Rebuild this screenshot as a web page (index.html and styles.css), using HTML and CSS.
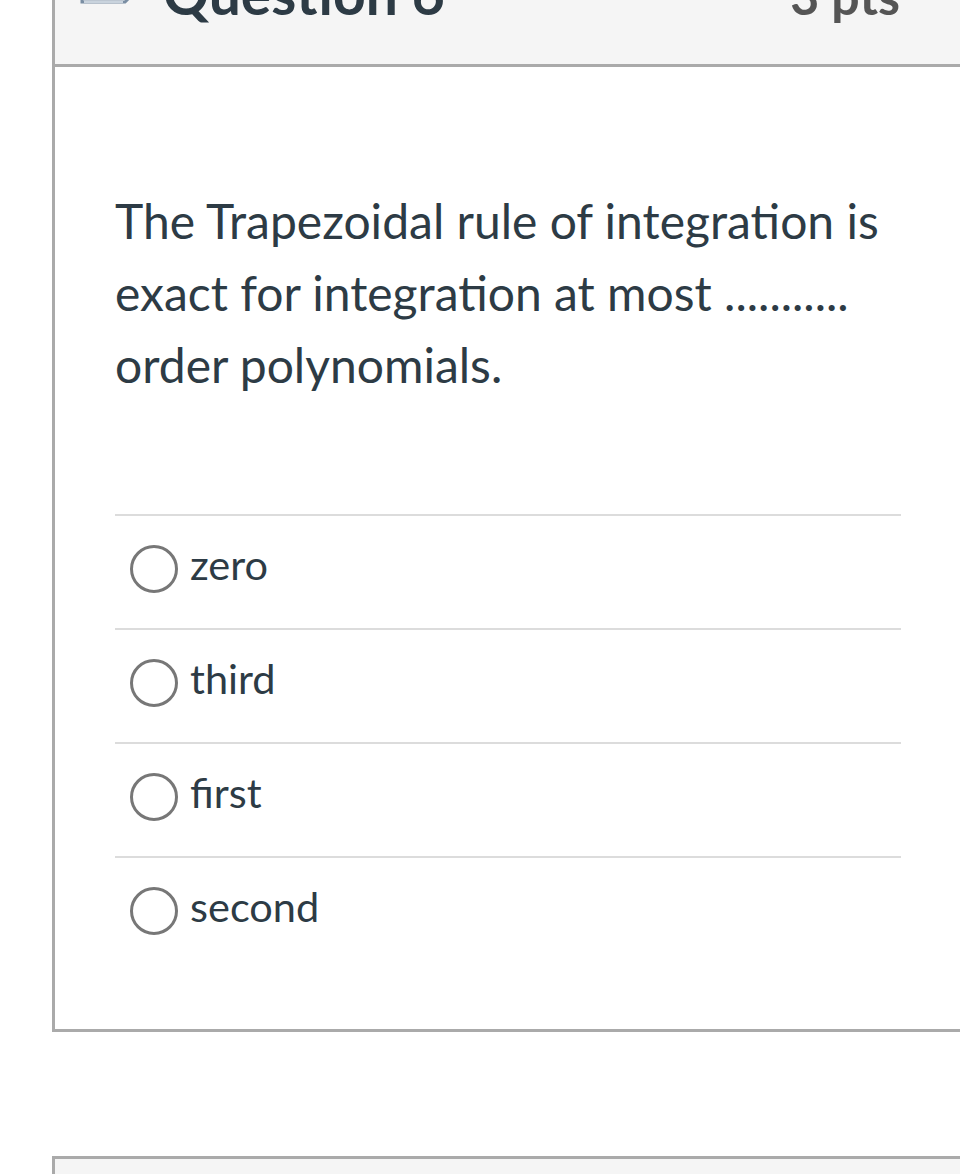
FILE: index.html
```html
<!DOCTYPE html>
<html>
<head>
<meta charset="utf-8">
<link rel="stylesheet" href="styles.css">
</head>
<body>
<div class="card">
  <div class="card-header">
    <div class="title">
      <svg class="q-icon" width="56" height="50" viewBox="0 0 56 50">
        <path d="M3 2 V42 H46 L52 36 V2" fill="#fff" stroke="#7a8ea3" stroke-width="3"/>
        <path d="M5 42 H44" stroke="#c9d3dd" stroke-width="2"/>
      </svg>
      <span class="q-name">Question 6</span>
    </div>
    <span class="q-pts">3 pts</span>
  </div>
  <div class="card-body">
    <p class="q-text">The Trapezoidal rule of integration is exact for integration at most ........... order polynomials.</p>
    <div class="answers">
      <label class="answer"><span class="radio"></span><span class="a-text">zero</span></label>
      <label class="answer"><span class="radio"></span><span class="a-text">third</span></label>
      <label class="answer"><span class="radio"></span><span class="a-text">first</span></label>
      <label class="answer"><span class="radio"></span><span class="a-text">second</span></label>
    </div>
  </div>
</div>
<div class="card next">
  <div class="card-header"></div>
</div>
</body>
</html>
```

FILE: styles.css
```css
html, body {
  margin: 0;
  padding: 0;
  background: #fff;
  font-family: Lato, "Open Sans", sans-serif;
  color: #2d3b45;
  overflow: hidden;
}

.card {
  margin-left: 52px;
  margin-top: -42px;
  border: 3px solid #aaaaaa;
  border-right: none;
  background: #fff;
}

.card-header {
  background: #f5f5f5;
  height: 103px;
  border-bottom: 3px solid #aaaaaa;
  display: flex;
  justify-content: space-between;
  align-items: flex-start;
  padding: 0 60px 0 24px;
}

.title {
  display: flex;
  align-items: flex-start;
}

.q-icon {
  margin-top: -1px;
  margin-right: 28px;
}

.q-name {
  font-size: 57px;
  font-weight: 700;
  line-height: 56px;
  margin-top: 4px;
}

.q-pts {
  font-size: 50px;
  font-weight: 700;
  line-height: 56px;
  margin-top: 7px;
  color: #555;
}

.card-body {
  padding: 118px 59px 59px 60px;
}

.q-text {
  margin: 0 0 113px 0;
  font-size: 48px;
  line-height: 72px;
}

.answers {
  display: flex;
  flex-direction: column;
}

.answer {
  box-sizing: border-box;
  display: flex;
  align-items: center;
  gap: 12px;
  height: 114px;
  border-top: 2px solid #dcdcdc;
  padding: 0 0 6px 15px;
}

.radio {
  width: 42px;
  height: 42px;
  border: 3px solid #777;
  border-radius: 50%;
  flex: none;
}

.a-text {
  font-size: 41.5px;
  line-height: 48px;
  margin-bottom: 11px;
}

.card.next {
  margin-top: 124px;
  height: 200px;
}

.card.next .card-header {
  height: 200px;
  border-bottom: none;
}
```
